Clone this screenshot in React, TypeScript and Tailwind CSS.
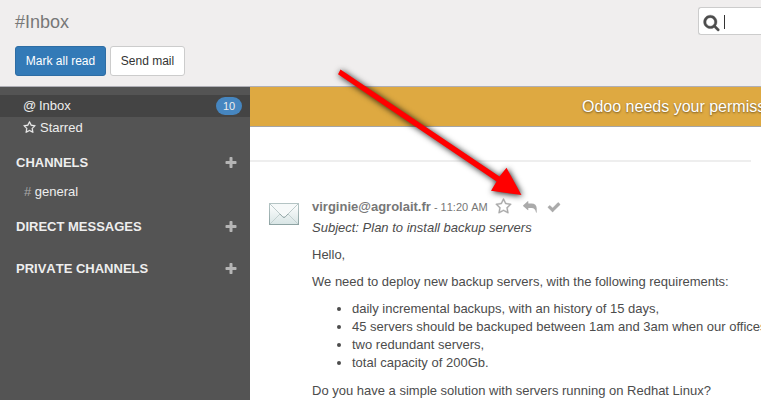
import React from 'react';

const PATHS = {
  star: 'M1201 1004l306-297-422-62-189-382-189 382-422 62 306 297-73 421 378-199 377 199zm527-357q0 22-26 48l-363 354 86 500q1 7 1 20 0 50-41 50-19 0-40-12l-449-236-449 236q-22 12-40 12-21 0-31.5-14.5t-10.5-35.5q0-6 2-20l86-500-364-354q-25-27-25-48 0-37 56-46l502-73 225-455q19-41 49-41t49 41l225 455 502 73q56 9 56 46z',
  check: 'M1671 566q0 40-28 68l-724 724-136 136q-28 28-68 28t-68-28l-136-136-362-362q-28-28-28-68t28-68l136-136q28-28 68-28t68 28l294 295 656-657q28-28 68-28t68 28l136 136q28 28 28 68z',
  plus: 'M1600 736v192q0 40-28 68t-68 28h-416v416q0 40-28 68t-68 28h-192q-40 0-68-28t-28-68v-416h-416q-40 0-68-28t-28-68v-192q0-40 28-68t68-28h416v-416q0-40 28-68t68-28h192q40 0 68 28t28 68v416h416q40 0 68 28t28 68z',
  search: 'M1216 832q0-185-131.5-316.5t-316.5-131.5-316.5 131.5-131.5 316.5 131.5 316.5 316.5 131.5 316.5-131.5 131.5-316.5zm512 832q0 52-38 90t-90 38q-54 0-90-38l-343-342q-179 124-399 124-143 0-273.5-55.5t-225-150-150-225-55.5-273.5 55.5-273.5 150-225 225-150 273.5-55.5 273.5 55.5 225 150 150 225 55.5 273.5q0 220-124 399l343 343q37 37 37 90z',
};

function Icon({ name, className }: { name: keyof typeof PATHS; className: string }) {
  return (
    <svg viewBox="0 0 1792 1792" fill="currentColor" className={`shrink-0 overflow-visible ${className}`}>
      <path d={PATHS[name]} />
    </svg>
  );
}

function ReplyIcon() {
  return (
    <svg width="14" height="12" viewBox="0 0 14 12" fill="currentColor" className="ml-[11px] shrink-0 text-[#aaaaaa]">
      <path d="M0.300 4.200L4.700 0.200Q5.300 -0.100 5.300 0.600V2.500H8.500C11.800 2.500 13.600 4.300 13.700 7.200V11.300Q13.600 12 13 11.400C12.500 8.500 11.200 6.900 8.500 6.900H5.300V8.800Q5.300 9.500 4.700 9.100L0.300 5.200Q-0.200 4.700 0.300 4.200Z" />
    </svg>
  );
}

function SectionTitle({ title, className }: { title: string; className: string }) {
  return (
    <div className={`flex h-[18px] items-center justify-between pr-3 pl-4 font-bold text-[#eeeeee] [font-kerning:none] ${className}`}>
      <span>{title}</span>
      <Icon name="plus" className="size-[14px] text-[#b5b5b5]" />
    </div>
  );
}

function Envelope() {
  return (
    <svg width="32" height="24" viewBox="0 0 32 24" className="mt-[15px] shrink-0">
      <defs>
        <linearGradient id="paper" x1="0" y1="0" x2="0" y2="1">
          <stop offset="0" stopColor="#ffffff" />
          <stop offset="1" stopColor="#d8e5e5" />
        </linearGradient>
        <linearGradient id="edge" x1="0" y1="0" x2="0" y2="1">
          <stop offset="0" stopColor="#b4c4c4" />
          <stop offset="1" stopColor="#8ea3a3" />
        </linearGradient>
      </defs>
      <rect x="1.5" y="1.5" width="29" height="21" fill="url(#paper)" stroke="url(#edge)" />
      <path d="M2 22L12 12M30 22L20 12" stroke="#c3d0d0" fill="none" />
      <path d="M2 2L14.500 14.500Q16 16.500 17.500 14.500L30 2" stroke="#bccaca" fill="#f6f9f9" />
      <path d="M12 12l2.500 2.700Q16 16.500 17.500 14.700L20 12" stroke="#96a9a9" fill="none" />
    </svg>
  );
}

export default function App() {
  return (
    <div className="relative flex h-[400px] w-[761px] flex-col overflow-hidden bg-white font-['Liberation_Sans',Arial,sans-serif] text-[13px] leading-[18px] text-[#4c4c4c]">
      <header className="flex h-[87px] shrink-0 justify-between border-b border-[#afafb6] bg-[#f0eeee]">
        <div className="pl-[15px]">
          <h1 className="mt-[9px] text-[18px] leading-[26px] text-[#777777]">#Inbox</h1>
          <div className="mt-[11px] flex gap-1 text-[12px]">
            <button className="h-[30px] w-[91px] rounded-[3px] border border-[#2e6da4] bg-[#337ab7] text-white">Mark all read</button>
            <button className="h-[30px] w-[75px] rounded-[3px] border border-[#cccccc] bg-white text-[#333333]">Send mail</button>
          </div>
        </div>
        <div className="mt-[7px] flex h-[28px] w-[63px] items-center rounded-l-[3px] border border-r-0 border-[#cccccc] bg-white pl-[4px]">
          <Icon name="search" className="mt-[2px] size-[17px] stroke-current stroke-[40]" />
          <span className="mt-px ml-[4px] h-[14px] w-px bg-[#333333]" />
        </div>
      </header>
      <div className="flex min-h-0 flex-1">
        <aside className="w-[250px] shrink-0 bg-[#545454] pt-2 text-[#eeeeee]">
          <div className="flex h-[22px] items-center justify-between bg-[#444444] pr-2 pl-[23px]">
            <span className="flex items-center">
              <span className="w-[16px] text-[13px]">@</span>
              <span>Inbox</span>
            </span>
            <span className="flex h-[18px] w-[26px] items-center justify-center rounded-full bg-[#4686c0] pb-px text-[11px]">10</span>
          </div>
          <div className="flex h-[22px] items-center gap-[4px] pl-[23px]">
            <Icon name="star" className="-mt-px size-[13px] stroke-current stroke-[40]" />
            <span>Starred</span>
          </div>
          <SectionTitle title="CHANNELS" className="mt-[15px] [font-kerning:normal]" />
          <div className="mt-[11px] pl-6"><span className="text-[#a8a8a8]">#</span> general</div>
          <SectionTitle title="DIRECT MESSAGES" className="mt-[17px]" />
          <SectionTitle title="PRIVATE CHANNELS" className="mt-6" />
        </aside>
        <main className="min-w-0 flex-1 overflow-hidden">
          <div className="h-[40px] overflow-hidden border-b border-[#a5a5a5] bg-[#dea941] pl-[332px] text-[16px] leading-[39px] whitespace-nowrap text-white [text-shadow:0_1px_2px_rgba(0,0,0,.5)]">
            Odoo needs your permission
          </div>
          <hr className="mt-[33px] mr-[10px] border-0 border-t-2 border-[#eeeeee]" />
          <article className="mt-[25px] flex pl-[18px] whitespace-nowrap">
            <Envelope />
            <div className="ml-[12px] mt-[11px]">
              <div className="flex h-[18px] items-center text-[#777777]">
                <strong>virginie@agrolait.fr</strong>
                <span className="ml-[3px] w-[55px] text-[11px] [font-kerning:none]">- 11:20 AM</span>
                <Icon name="star" className="-mt-px ml-[6px] size-[17px] stroke-current stroke-[30] text-[#aaaaaa]" />
                <ReplyIcon />
                <Icon name="check" className="-mt-px ml-[10px] size-[14px] stroke-current stroke-[40] text-[#aaaaaa]" />
              </div>
              <div className="mt-[3px] italic">Subject: Plan to install backup servers</div>
              <p className="mt-[9px]">Hello,</p>
              <p className="mt-[9px]">We need to deploy new backup servers, with the following requirements:</p>
              <ul className="mt-[9px] list-disc pl-10">
                <li>daily incremental backups, with an history of 15 days,</li>
                <li>45 servers should be backuped between 1am and 3am when our offices are closed,</li>
                <li>two redundant servers,</li>
                <li>total capacity of 200Gb.</li>
              </ul>
              <p className="mt-[10px]">Do you have a simple solution with servers running on Redhat Linux?</p>
            </div>
          </article>
        </main>
      </div>
      <svg className="pointer-events-none absolute top-0 left-0 h-[400px] w-[761px]" viewBox="0 0 761 400">
        <path
          d="M340.500 69.500L499.500 176.600L506.500 167.800L521.500 195L491 190.800L496.600 181.600L338 74.300Z"
          fill="#ff0000"
          className="[filter:drop-shadow(1px_1px_3px_rgba(0,0,0,.9))]"
        />
      </svg>
    </div>
  );
}
